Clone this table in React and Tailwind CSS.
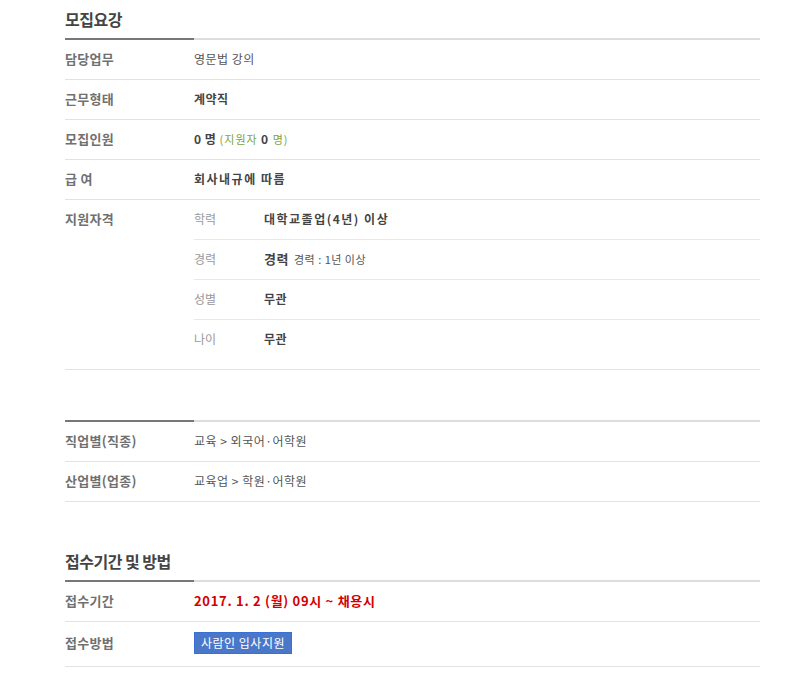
import React from 'react';

const FONT = { fontFamily: '"Noto Sans CJK KR", "Noto Sans", sans-serif' };

// Section heading with the two-tone rule underneath
function SectionTitle({ title }) {
  return (
    <div>
      {title ? (
        <h2 className="h-[38px] flex items-center text-[16px] font-bold text-[#444] tracking-[-0.5px]">
          {title}
        </h2>
      ) : null}
      <div className="flex h-[2px]">
        <div className="w-[129px] bg-[#777]"></div>
        <div className="flex-1 bg-[#ddd]"></div>
      </div>
    </div>
  );
}

function Row({ label, children, tall }) {
  return (
    <div
      className={`flex items-center border-b border-[#e2e2e2] pb-[2px] ${
        tall ? 'h-[45px]' : 'h-[40px]'
      }`}
    >
      <div className="w-[129px] text-[13px] font-bold text-[#707070] tracking-[0.3px]">{label}</div>
      <div className="flex-1 text-[12px] text-[#555] tracking-[0.5px]">{children}</div>
    </div>
  );
}

const QUALIFICATIONS = [
  { label: '학력', value: <b className="text-[#444] tracking-[1.5px]">대학교졸업(4년) 이상</b> },
  {
    label: '경력',
    value: (
      <>
        <b className="text-[#444] text-[13px] tracking-[0.5px]">경력</b>
        <span className="ml-[5px] text-[11px] text-[#555] tracking-[0.5px]">경력 : 1년 이상</span>
      </>
    ),
  },
  { label: '성별', value: <b className="text-[#444] tracking-[0.5px]">무관</b> },
  { label: '나이', value: <b className="text-[#444] tracking-[0.5px]">무관</b> },
];

export default function App() {
  return (
    <div className="bg-white min-h-[691px]" style={FONT}>
      <div className="ml-[65px] w-[695px]">
        {/* 모집요강 */}
        <SectionTitle title="모집요강" />
        <Row label="담당업무">영문법 강의</Row>
        <Row label="근무형태">
          <b className="text-[#444]">계약직</b>
        </Row>
        <Row label="모집인원">
          <b className="text-[#444]">0 명</b>{' '}
          <span className="text-[#7aa33a] text-[11px] tracking-[1px]">
            (지원자 <b className="text-[#444] text-[12px]">0</b> 명)
          </span>
        </Row>
        <Row label="급 여">
          <b className="text-[#444] tracking-[1.5px]">회사내규에 따름</b>
        </Row>
        <div className="flex border-b border-[#e2e2e2] pb-[9px]">
          <div className="w-[129px] h-[40px] pb-[2px] flex items-center text-[13px] font-bold text-[#707070] tracking-[0.3px]">
            지원자격
          </div>
          <div className="flex-1">
            {QUALIFICATIONS.map((q, i) => (
              <div
                key={q.label}
                className={`flex items-center h-[40px] pb-[2px] text-[12px] ${
                  i < QUALIFICATIONS.length - 1 ? 'border-b border-[#e8e8e8]' : ''
                }`}
              >
                <div className="w-[70px] text-[#999]">{q.label}</div>
                <div className="flex-1">{q.value}</div>
              </div>
            ))}
          </div>
        </div>

        {/* 직종/업종 */}
        <div className="mt-[50px]">
          <SectionTitle />
          <Row label="직업별(직종)">교육 &gt; 외국어·어학원</Row>
          <Row label="산업별(업종)">교육업 &gt; 학원·어학원</Row>
        </div>

        {/* 접수기간 및 방법 */}
        <div className="mt-[40px]">
          <SectionTitle title="접수기간 및 방법" />
          <Row label="접수기간">
            <b className="text-[#d40000] text-[13px] tracking-[0.7px]">2017. 1. 2 (월) 09시 ~ 채용시</b>
          </Row>
          <Row label="접수방법" tall>
            <button className="h-[22px] w-[98px] bg-[#4b77c9] border border-[#3a6fd6] text-white text-[12px] leading-none">
              사람인 입사지원
            </button>
          </Row>
        </div>
      </div>
    </div>
  );
}
